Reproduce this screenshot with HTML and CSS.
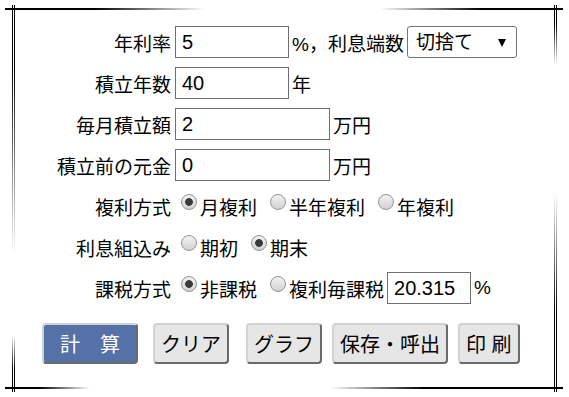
FILE: index.html
```html
<!DOCTYPE html>
<html lang="ja">
<head>
    <meta charset="UTF-8">
    <title>積立計算</title>
    <link rel="stylesheet" href="styles.css">
</head>
<body>
<div class="frame">
    <span class="corner tl"></span>
    <span class="corner tr"></span>
    <span class="corner bl"></span>
    <span class="corner br"></span>

    <form class="calc">
        <div class="row">
            <label class="label" for="rate">年利率</label>
            <input class="num" type="text" id="rate" value="5">
            <span class="unit">%，利息端数</span>
            <div class="select-wrap">
                <select id="round">
                    <option>切捨て</option>
                    <option>四捨五入</option>
                    <option>切上げ</option>
                </select>
            </div>
        </div>
        <div class="row">
            <label class="label" for="years">積立年数</label>
            <input class="num" type="text" id="years" value="40">
            <span class="unit">年</span>
        </div>
        <div class="row">
            <label class="label" for="monthly">毎月積立額</label>
            <input class="num wide" type="text" id="monthly" value="2">
            <span class="unit">万円</span>
        </div>
        <div class="row">
            <label class="label" for="principal">積立前の元金</label>
            <input class="num wide" type="text" id="principal" value="0">
            <span class="unit">万円</span>
        </div>
        <div class="row">
            <span class="label">複利方式</span>
            <label class="opt"><input type="radio" name="compound" checked>月複利</label>
            <label class="opt"><input type="radio" name="compound">半年複利</label>
            <label class="opt"><input type="radio" name="compound">年複利</label>
        </div>
        <div class="row">
            <span class="label">利息組込み</span>
            <label class="opt"><input type="radio" name="timing">期初</label>
            <label class="opt"><input type="radio" name="timing" checked>期末</label>
        </div>
        <div class="row">
            <span class="label">課税方式</span>
            <label class="opt"><input type="radio" name="tax" checked>非課税</label>
            <label class="opt"><input type="radio" name="tax">複利毎課税</label>
            <input class="num rate" type="text" id="taxrate" value="20.315">
            <span class="unit">%</span>
        </div>

        <div class="buttons">
            <button type="button" class="btn primary">計　算</button>
            <button type="button" class="btn clear">クリア</button>
            <button type="button" class="btn">グラフ</button>
            <button type="button" class="btn">保存・呼出</button>
            <button type="button" class="btn">印 刷</button>
        </div>
    </form>
</div>
</body>
</html>
```

FILE: styles.css
```css
body {
    margin: 0;
    background-color: #fff;
    color: #000;
    font-family: "Liberation Sans", "Noto Sans CJK JP", sans-serif;
    font-size: 19px;
}

.frame {
    position: relative;
    width: 569px;
    height: 397px;
    box-sizing: border-box;
    padding-top: 26px;
    overflow: hidden;
}

/* decorative corner lines */
.corner::before,
.corner::after {
    content: "";
    position: absolute;
}

.corner::before {
    height: 2px;
}

.corner::after {
    width: 3px;
}

.tl::before {
    left: 5px;
    top: 8px;
    width: 200px;
    background: linear-gradient(to right, #000 45%, rgba(0, 0, 0, 0));
}

.tl::after {
    left: 12px;
    top: 5px;
    height: 250px;
    background:
        linear-gradient(to bottom, #000 25%, rgba(0, 0, 0, 0)) left / 1px 100% no-repeat,
        linear-gradient(to bottom, #000 25%, rgba(0, 0, 0, 0)) right / 1px 100% no-repeat;
}

.tr::before {
    left: 380px;
    top: 8px;
    width: 183px;
    background: linear-gradient(to left, #000 45%, rgba(0, 0, 0, 0));
}

.tr::after {
    left: 554px;
    top: 5px;
    height: 60px;
    background:
        linear-gradient(to bottom, #000 30%, rgba(0, 0, 0, 0)) left / 1px 100% no-repeat,
        linear-gradient(to bottom, #000 30%, rgba(0, 0, 0, 0)) right / 1px 100% no-repeat;
}

.bl::before {
    left: 5px;
    top: 387px;
    width: 85px;
    background: linear-gradient(to right, #000 40%, rgba(0, 0, 0, 0));
}

.bl::after {
    left: 12px;
    top: 335px;
    height: 57px;
    background:
        linear-gradient(to top, #000 40%, rgba(0, 0, 0, 0)) left / 1px 100% no-repeat,
        linear-gradient(to top, #000 40%, rgba(0, 0, 0, 0)) right / 1px 100% no-repeat;
}

.br::before {
    left: 330px;
    top: 387px;
    width: 233px;
    background: linear-gradient(to left, #000 60%, rgba(0, 0, 0, 0));
}

.br::after {
    left: 554px;
    top: 192px;
    height: 200px;
    background:
        linear-gradient(to top, #000 40%, rgba(0, 0, 0, 0)) left / 1px 100% no-repeat,
        linear-gradient(to top, #000 40%, rgba(0, 0, 0, 0)) right / 1px 100% no-repeat;
}

/* form rows */
.row {
    display: flex;
    align-items: center;
    height: 32px;
    margin-bottom: 9px;
    white-space: nowrap;
}

.label {
    width: 171px;
    margin-right: 4px;
    text-align: right;
}

.num {
    box-sizing: border-box;
    width: 114px;
    height: 32px;
    margin: 0;
    padding: 0 6px;
    border: 1px solid #6f6f6f;
    border-radius: 0;
    font-family: "Liberation Sans", sans-serif;
    font-size: 20px;
    color: #000;
}

.num.wide {
    width: 155px;
}

.num.rate {
    width: 84px;
    margin-left: 3px;
}

.unit {
    margin-left: 3px;
}

.select-wrap {
    position: relative;
    margin-left: 3px;
}

.select-wrap select {
    appearance: none;
    -webkit-appearance: none;
    box-sizing: border-box;
    width: 110px;
    height: 32px;
    margin: 0;
    padding: 0 0 0 8px;
    border: 1px solid #767676;
    border-radius: 3px;
    background-color: #fff;
    font-family: "Liberation Sans", "Noto Sans CJK JP", sans-serif;
    font-size: 19px;
    color: #000;
}

.select-wrap::after {
    content: "";
    position: absolute;
    right: 11px;
    top: 13px;
    border-left: 4px solid transparent;
    border-right: 4px solid transparent;
    border-top: 8px solid #000;
    pointer-events: none;
}

.opt {
    display: flex;
    align-items: center;
}

.opt + .opt {
    margin-left: 7px;
}

.opt input[type="radio"] {
    appearance: none;
    -webkit-appearance: none;
    box-sizing: border-box;
    width: 16px;
    height: 16px;
    margin: 0 3px 8px 6px;
    border: 1px solid #949494;
    border-radius: 50%;
    background: linear-gradient(to bottom, #f2f2f2, #d2d2d2);
}

.opt input[type="radio"]:checked {
    background:
        radial-gradient(circle, #3a3a3a 0, #3a3a3a 3.5px, rgba(0, 0, 0, 0) 4.2px),
        linear-gradient(to bottom, #f2f2f2, #d2d2d2);
}

/* buttons */
.buttons {
    display: flex;
    gap: 10px;
    margin-top: 19px;
    padding-left: 42px;
}

.btn {
    box-sizing: border-box;
    height: 41px;
    padding: 0 6px;
    border: 2px solid;
    border-color: #d2d2d2 #6a6a6a #6a6a6a #d2d2d2;
    border-radius: 4px;
    background-color: #e6e6e6;
    font-family: "Liberation Sans", "Noto Sans CJK JP", sans-serif;
    font-size: 20px;
    color: #000;
    cursor: pointer;
}

.btn.primary {
    width: 96px;
    margin-right: 5px;
    background-color: #5670a8;
    color: #fff;
}

.btn.clear {
    margin-right: 7px;
}
```
